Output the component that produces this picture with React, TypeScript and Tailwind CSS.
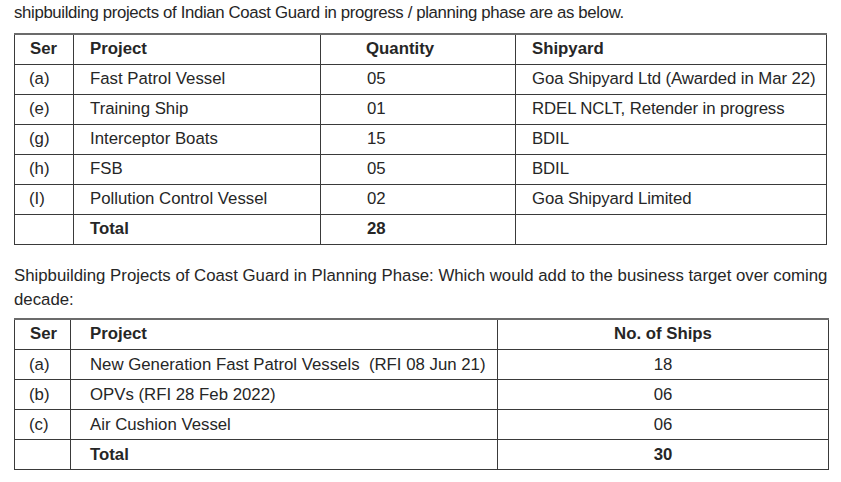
import React from 'react';

const cell = 'border border-[#3a3a3a] h-[30px] py-0 align-middle';

const progress = [
  { ser: '(a)', project: 'Fast Patrol Vessel', qty: '05', yard: 'Goa Shipyard Ltd (Awarded in Mar 22)' },
  { ser: '(e)', project: 'Training Ship', qty: '01', yard: 'RDEL NCLT, Retender in progress' },
  { ser: '(g)', project: 'Interceptor Boats', qty: '15', yard: 'BDIL' },
  { ser: '(h)', project: 'FSB', qty: '05', yard: 'BDIL' },
  { ser: '(I)', project: 'Pollution Control Vessel', qty: '02', yard: 'Goa Shipyard Limited' },
];

const planning = [
  { ser: '(a)', project: 'New Generation Fast Patrol Vessels  (RFI 08 Jun 21)', ships: '18' },
  { ser: '(b)', project: 'OPVs (RFI 28 Feb 2022)', ships: '06' },
  { ser: '(c)', project: 'Air Cushion Vessel', ships: '06' },
];

export default function App() {
  return (
    <div className="w-[841px] h-[482px] bg-white text-[#262626] font-['Liberation_Sans',Arial,sans-serif] text-[16.8px] leading-[24px] pl-[14px] pr-[13px] pt-0 overflow-hidden">
      <p className="h-[33px] pt-[1px] tracking-[-0.35px] whitespace-nowrap">
        shipbuilding projects of Indian Coast Guard in progress / planning phase are as below.
      </p>

      <table className="border-collapse w-[813px] table-fixed">
        <colgroup>
          <col className="w-[59px]" />
          <col className="w-[247px]" />
          <col className="w-[195px]" />
          <col />
        </colgroup>
        <thead>
          <tr className="font-bold">
            <td className={`${cell} h-[28px] border-t-2 border-t-[#6b6b6b] pl-[15px]`}>Ser</td>
            <td className={`${cell} h-[28px] border-t-2 border-t-[#6b6b6b] pl-[16px]`}>Project</td>
            <td className={`${cell} h-[28px] border-t-2 border-t-[#6b6b6b] pl-[45px]`}>Quantity</td>
            <td className={`${cell} h-[28px] border-t-2 border-t-[#6b6b6b] pl-[16px]`}>Shipyard</td>
          </tr>
        </thead>
        <tbody>
          {progress.map((r) => (
            <tr key={r.ser}>
              <td className={`${cell} pl-[14px]`}>{r.ser}</td>
              <td className={`${cell} pl-[16px]`}>{r.project}</td>
              <td className={`${cell} pl-[46px]`}>{r.qty}</td>
              <td className={`${cell} pl-[16px] whitespace-nowrap tracking-[-0.1px]`}>{r.yard}</td>
            </tr>
          ))}
          <tr className="font-bold">
            <td className={cell}></td>
            <td className={`${cell} pl-[16px]`}>Total</td>
            <td className={`${cell} pl-[46px]`}>28</td>
            <td className={cell}></td>
          </tr>
        </tbody>
      </table>

      <p className="mt-[19px] mb-[6px] leading-[24px]">
        Shipbuilding Projects of Coast Guard in Planning Phase: Which would add to the business target over coming
        decade:
      </p>

      <table className="border-collapse w-[815px] table-fixed">
        <colgroup>
          <col className="w-[56px]" />
          <col className="w-[427px]" />
          <col />
        </colgroup>
        <thead>
          <tr className="font-bold">
            <td className={`${cell} h-[31px] border-t-2 border-t-[#6b6b6b] pl-[15px]`}>Ser</td>
            <td className={`${cell} h-[31px] border-t-2 border-t-[#6b6b6b] pl-[19px]`}>Project</td>
            <td className={`${cell} h-[31px] border-t-2 border-t-[#6b6b6b] text-center`}>No. of Ships</td>
          </tr>
        </thead>
        <tbody>
          {planning.map((r) => (
            <tr key={r.ser}>
              <td className={`${cell} pl-[14px]`}>{r.ser}</td>
              <td className={`${cell} pl-[19px] whitespace-pre`}>{r.project}</td>
              <td className={`${cell} text-center`}>{r.ships}</td>
            </tr>
          ))}
          <tr className="font-bold">
            <td className={cell}></td>
            <td className={`${cell} pl-[19px]`}>Total</td>
            <td className={`${cell} text-center`}>30</td>
          </tr>
        </tbody>
      </table>
    </div>
  );
}
